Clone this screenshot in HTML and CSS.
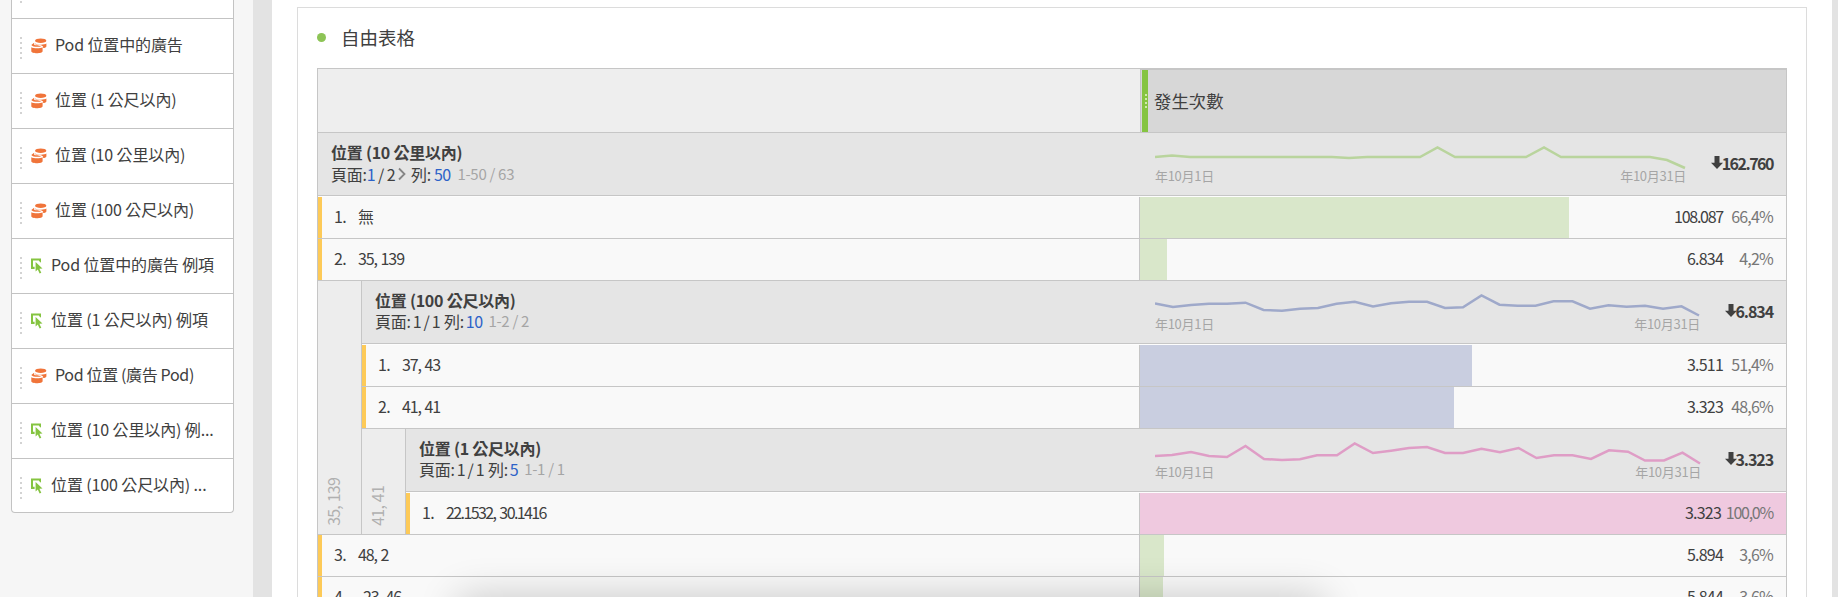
FILE: index.html
```html
<!DOCTYPE html>
<html lang="zh-Hant"><head><meta charset="utf-8"><title>自由表格</title><link rel="stylesheet" href="styles.css"></head>
<body>
<svg width="0" height="0" class="defs" aria-hidden="true"><defs>
<symbol id="dim" viewBox="0 0 16 16"><ellipse cx="9.700" cy="2.700" rx="5.600" ry="2.300"/><path d="M4.200 5.400c1.800 1.600 9.300 1.700 11.200.1v3c-.6 1.200-2 1.500-3.300 1.500V8.400C10.600 7 7 7 4.200 6.300zM.3 9.200c2.200 1.500 9 1.500 11.300.1v4c0 2.600-11.300 2.600-11.300 0zM.3 6.900 3.100 4.700 3.300 6.900C5 7.300 8 7 10.200 8.200 8 9.100 1.300 9 .3 6.900z"/></symbol>
<symbol id="event" viewBox="0 0 12 16"><path d="M0 .5h10v4.300L8 3V2.500H2v6.300h1.600V11H0z"/><path d="M4.600 4 11.500 10.400 8.400 10.700 10.300 14.700 8.600 15.500 6.800 11.400 4.600 13.500z"/></symbol>
<symbol id="down" viewBox="0 0 12 13"><path d="M3.500 0h5v6.800H12L6 13 0 6.800h3.500z"/></symbol>
</defs></svg>
<div class="app">
<aside class="rail"><div class="list">
<div class="item first"><i class="grip"></i></div>
<div class="item"><i class="grip"></i><svg class="dim"><use href="#dim"/></svg><span>Pod 位置中的廣告</span></div>
<div class="item"><i class="grip"></i><svg class="dim"><use href="#dim"/></svg><span>位置 (1 公尺以內)</span></div>
<div class="item"><i class="grip"></i><svg class="dim"><use href="#dim"/></svg><span>位置 (10 公里以內)</span></div>
<div class="item"><i class="grip"></i><svg class="dim"><use href="#dim"/></svg><span>位置 (100 公尺以內)</span></div>
<div class="item"><i class="grip"></i><svg class="event"><use href="#event"/></svg><span>Pod 位置中的廣告 例項</span></div>
<div class="item"><i class="grip"></i><svg class="event"><use href="#event"/></svg><span>位置 (1 公尺以內) 例項</span></div>
<div class="item"><i class="grip"></i><svg class="dim"><use href="#dim"/></svg><span class="tight">Pod 位置 (廣告 Pod)</span></div>
<div class="item"><i class="grip"></i><svg class="event"><use href="#event"/></svg><span>位置 (10 公里以內) 例...</span></div>
<div class="item"><i class="grip"></i><svg class="event"><use href="#event"/></svg><span>位置 (100 公尺以內) ...</span></div>
</div></aside>
<main class="page"><section class="panel">
<h1 class="title"><i class="dot"></i><span>自由表格</span></h1>
<div class="table">
<div class="head"><div class="blank"></div><div class="metric"><i class="handle"></i><span>發生次數</span></div></div>

<div class="group"><div class="info"><b>位置 (10 公里以內)</b><div class="pager"><span>頁面:</span><em>1</em><span class="of">/ 2</span><svg class="next" viewBox="0 0 8 12"><path d="M1 .5l5.500 5.500L1 11.500"/></svg><span>列:</span><em class="n">50</em><small>1-50 / 63</small></div></div>
<div class="trend"><div class="chart w1"><svg class="green" viewBox="1155 141 531 32"><polyline points="1155,157 1172,155.500 1190,157 1332,157 1349,158 1367,157 1420,157 1437.500,147.500 1455,157 1526,157 1544,147.500 1561,157 1650,157 1667,160 1685,168"/></svg><div class="dates"><span>年10月1日</span><span>年10月31日</span></div></div><div class="total long"><svg><use href="#down"/></svg><b>162.760</b></div></div></div>
<div class="row lead"><div class="name"><span class="no">1.</span><span>無</span></div><div class="val"><i class="bar g" style="width:66.4%"></i><span class="count long">108.087</span><span class="pct">66,4%</span></div></div>
<div class="row"><div class="name"><span class="no">2.</span><span>35, 139</span></div><div class="val"><i class="bar g" style="width:4.2%"></i><span class="count">6.834</span><span class="pct">4,2%</span></div></div>

<div class="nest"><div class="side"><span>35, 139</span></div><div class="inner">
<div class="group"><div class="info"><b>位置 (100 公尺以內)</b><div class="pager sub"><span>頁面:</span><span class="p">1 / 1</span><span class="r">列:</span><em class="n">10</em><small>1-2 / 2</small></div></div>
<div class="trend"><div class="chart w2"><svg class="blue" viewBox="1155 289 545 32"><polyline points="1155,303.500 1173,307 1191,305 1209,303.700 1227,303.700 1245.500,302.700 1263.500,310 1282,310.700 1300,308.700 1318,308 1336.600,303.700 1354.700,301.700 1373,306.500 1391,303.200 1409,301.700 1427,301.700 1445,308 1463,307.300 1481.500,295.500 1499.500,304.700 1517.600,305.700 1535.500,305.700 1553.500,301.300 1572.500,301.300 1590,308.700 1608.500,305.300 1626.600,306.700 1645,305.700 1663,308.700 1681.500,306.300 1699,315.500"/></svg><div class="dates"><span>年10月1日</span><span>年10月31日</span></div></div><div class="total"><svg><use href="#down"/></svg><b>6.834</b></div></div></div>
<div class="row lead"><div class="name"><span class="no">1.</span><span>37, 43</span></div><div class="val"><i class="bar b" style="width:51.4%"></i><span class="count">3.511</span><span class="pct">51,4%</span></div></div>
<div class="row"><div class="name"><span class="no">2.</span><span>41, 41</span></div><div class="val"><i class="bar b" style="width:48.6%"></i><span class="count">3.323</span><span class="pct">48,6%</span></div></div>
<div class="nest"><div class="side"><span>41, 41</span></div><div class="inner">
<div class="group"><div class="info"><b>位置 (1 公尺以內)</b><div class="pager sub"><span>頁面:</span><span class="p">1 / 1</span><span class="r">列:</span><em class="n">5</em><small>1-1 / 1</small></div></div>
<div class="trend"><div class="chart w3"><svg class="pink" viewBox="1155 437 546 32"><polyline points="1155,456 1172,455 1191,452 1209,456 1227,457 1245.500,446 1264,459 1282,460 1300,459.300 1317,455.300 1337,455.300 1354.700,443.500 1373,453 1391,450.700 1409,448 1427,447 1445,453 1463,453 1481.500,448.700 1500,452.300 1518.500,448 1536.500,458 1554,455.300 1572.500,455.300 1591,459 1609,450.300 1628,451.700 1645,460.500 1664,460.500 1682.500,452.700 1700,463.500"/></svg><div class="dates"><span>年10月1日</span><span>年10月31日</span></div></div><div class="total"><svg><use href="#down"/></svg><b>3.323</b></div></div></div>
<div class="row lead"><div class="name"><span class="no">1.</span><span class="coords">22.1532, 30.1416</span></div><div class="val"><i class="bar k" style="width:100%"></i><span class="count">3.323</span><span class="pct wide">100,0%</span></div></div>
</div></div>
</div></div>
<div class="row"><div class="name"><span class="no">3.</span><span>48, 2</span></div><div class="val"><i class="bar g" style="width:3.7%"></i><span class="count">5.894</span><span class="pct">3,6%</span></div></div>
<div class="row"><div class="name"><span class="no">4.</span><span class="far">23, 46</span></div><div class="val"><i class="bar g" style="width:3.6%"></i><span class="count">5.844</span><span class="pct">3,6%</span></div></div>
</div></section></main>
<div class="toast"></div>
</div>
</body></html>
```
FILE: styles.css
```css
*{box-sizing:border-box}
html,body{margin:0;height:100%;overflow:hidden}
body{background:#fff;color:#404040;font:16px/20px "Noto Sans CJK TC",sans-serif}
i,em{font-style:normal}
.defs{position:absolute}
.app{position:relative;display:flex;height:597px;overflow:hidden}
.rail{flex:none;width:272px;background:#f6f6f6;border-right:19px solid #e3e3e3;padding-left:11px}
.list{width:223px;height:513px;background:#fff;border:1px solid #c3c3c3;border-top:0;border-radius:0 0 4px 4px}
.item{height:55px;padding:0 0 1px 8px;display:flex;align-items:center;border-top:1px solid #c3c3c3;white-space:nowrap;letter-spacing:-.12px}
.item.first{height:18px;border:0;align-items:flex-start}
.grip{width:2px;height:22px;margin:4px 9px 0 0;background:repeating-linear-gradient(#d3d3d3 0 2px,transparent 2px 5px)}
.first .grip{height:2px;margin-top:1px}
.item span{position:relative;top:-2px}
.item .tight{letter-spacing:-.35px}
.dim{width:16px;height:16px;margin-right:8px;fill:#f0743a}
.event{width:12px;height:16px;margin-right:8px;fill:#85c441}
.page{flex:1;border-right:6px solid #e3e3e3;padding:7px 25px 0}
.panel{height:600px;border:1px solid #dcdcdc;padding:0 19px}
.title{margin:0;height:60px;display:flex;align-items:center;font-size:18.500px;font-weight:400;padding:0}
.title span{position:relative;top:-1px}
.dot{width:9px;height:9px;border-radius:50%;background:#8dc456;margin:-1px 15px 0 0}
.table{border:1px solid #c6c6c6;width:1470px}
.head{display:flex;height:64px;border-bottom:1px solid #c6c6c6}
.blank{flex:1;background:#eee}
.metric{width:646px;background:#d7d7d7;border-left:1px solid #c6c6c6;border-top:1px solid #c6c6c6;padding-left:1px;display:flex;align-items:center;font-size:17.400px}
.handle{width:6px;height:62px;margin-right:6px;background:#85c441;display:flex;align-items:center;justify-content:center}
.handle::after{content:"";width:2px;height:15px;margin-left:1px;background:repeating-linear-gradient(#cfe9ae 0 2px,transparent 2px 4px)}
.group{display:flex;height:63px;background:#e5e5e5;border-bottom:1px solid #c6c6c6}
.info{flex:1;padding:8px 0 0 13px;line-height:22px;white-space:nowrap;letter-spacing:-.25px}
.info b{display:block;margin-bottom:1px}
.pager{display:flex;align-items:center;height:20px}
.pager.sub{margin-top:-1px}
.pager em{color:#2d62c8;letter-spacing:-.6px}
.pager .of{margin-left:3px;letter-spacing:-.6px}
.pager .p{margin-left:2px;letter-spacing:-.8px}
.pager .n{margin-left:3px}
.pager .r{margin-left:4px}
.pager small{font-size:15px;color:#a5a5a5;margin-left:7px;letter-spacing:-.3px}
.pager.sub .n{margin-left:2px}
.pager.sub small{margin-left:6px}
.next{width:8px;height:14px;margin:0 5px 0 3px;fill:none;stroke:#858585;stroke-width:1.800}
.trend{width:645px;display:flex;justify-content:space-between;padding-right:13px}
.chart{margin-left:14px;padding-top:8px}
.w1{width:531px}.w2{width:545px}.w3{width:546px}
.chart svg{display:block;width:100%;height:32px;fill:none;stroke-width:2.500}
.green{stroke:#b9d49d}.blue{stroke:#9fa9ca}.pink{stroke:#df9dc6}
.dates{display:flex;justify-content:space-between;font-size:13px;line-height:14px;color:#a5a5a5;margin-top:-4px;letter-spacing:-.3px}
.total{display:flex;align-items:center;letter-spacing:-1.100px;padding-bottom:3px}
.total.long{letter-spacing:-1.500px}
.total svg{width:12px;height:13px;margin-right:-1px;fill:#404040}
.row{display:flex;height:42px;background:#f9f9f9;border-bottom:1px solid #c6c6c6}
.row.lead{height:43px;border-top:1px solid #fdfdfd}
.name{flex:1;border-left:4px solid #fdca58;padding:0 0 3px 12px;display:flex;align-items:center;letter-spacing:-1.100px;word-spacing:1.200px}
.no{width:24px;letter-spacing:-.6px}
.far{margin-left:5px}
.name .coords{letter-spacing:-1.600px;word-spacing:2px}
.val{width:647px;border-left:1px solid #c6c6c6;position:relative;display:flex;align-items:center;justify-content:flex-end;padding:0 13px 3px 0;letter-spacing:-.8px}
.bar{position:absolute;left:0;top:0;bottom:0}
.g{background:#d9e7ca}.b{background:#c9cee0}.k{background:#efc9df}
.count,.pct{position:relative}
.count.long{letter-spacing:-1.250px}
.pct{width:50px;text-align:right;color:#777}
.wide{width:52px;letter-spacing:-1.250px}
.nest{display:flex}
.side{width:44px;background:#ededed;border-right:1px solid #c6c6c6;border-bottom:1px solid #c6c6c6;display:flex;align-items:flex-end;padding:0 0 8px 5px;color:#b0b0b0;letter-spacing:-.8px;word-spacing:1px}
.side span{writing-mode:vertical-rl;transform:rotate(180deg)}
.inner{flex:1}
.toast{position:absolute;left:458px;top:597px;width:866px;height:60px;box-shadow:0 0 40px rgba(0,0,0,.2)}
```
